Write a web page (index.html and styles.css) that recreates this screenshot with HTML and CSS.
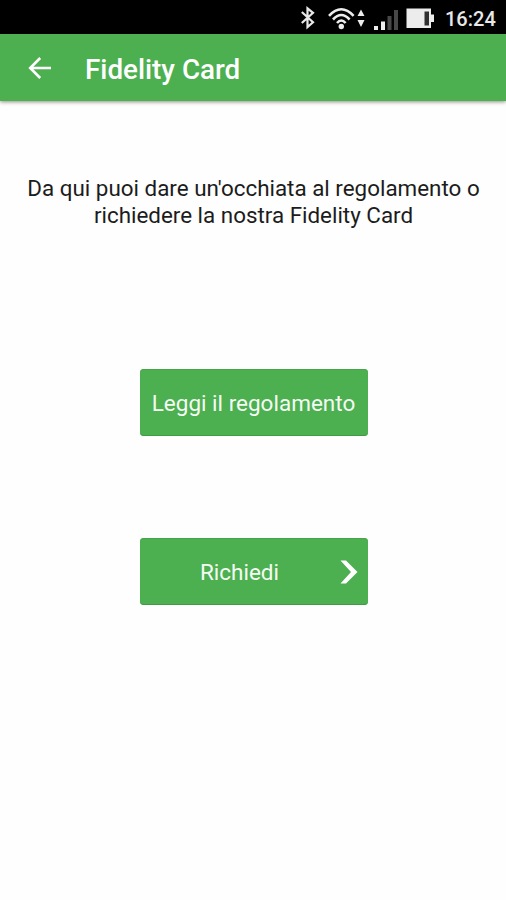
FILE: index.html
```html
<!DOCTYPE html>
<html lang="it">
<head>
<meta charset="utf-8">
<title>Fidelity Card</title>
<link rel="stylesheet" href="styles.css">
</head>
<body>
<div class="status-bar">
  <svg class="status-icons" width="138" height="34" viewBox="0 0 138 34" aria-hidden="true">
    <path class="bluetooth" d="M1.8 12 L13 22.3 L7.5 27 V8.3 L13 12.8 L1.8 23"/>
    <g class="wifi">
      <path d="M29 15.8 Q41.3 2.8 53.6 15.8"/>
      <path d="M33 19.5 Q41.3 10.5 49.6 19.5"/>
      <path d="M37 23 Q41.3 18 45.6 23"/>
    </g>
    <circle class="fill" cx="41.3" cy="26.5" r="2.7"/>
    <path class="fill" d="M57.5 16 L61 9.5 L64.5 16 Z M57.5 20 H64.5 L61 27 Z"/>
    <path class="fill" d="M74 26 H78 V30 H74 Z M81 21.5 H85 V30 H81 Z"/>
    <path class="dim" d="M87.5 16 H91.5 V30 H87.5 Z M94 10 H98 V30 H94 Z"/>
    <path class="fill" d="M106.5 8.5 H131 V14.5 H134 V22 H131 V28 H106.5 Z"/>
    <path class="empty" d="M124.5 11.5 H129 V25.5 H124.5 Z"/>
  </svg>
  <span class="clock">16:24</span>
</div>
<header class="app-bar">
  <svg class="back" width="24" height="24" viewBox="0 0 24 24" aria-label="Indietro"><path d="M23 12 H2.5 M12.2 2 L2.2 12 L12.2 22"/></svg>
  <h1 class="title">Fidelity Card</h1>
</header>
<main class="content">
  <p class="intro">Da qui puoi dare un'occhiata al regolamento o<br>richiedere la nostra Fidelity Card</p>
  <button class="button">Leggi il regolamento</button>
  <button class="button button-next">
    <span class="label">Richiedi</span>
    <svg width="18" height="24" viewBox="0 0 18 24" aria-hidden="true"><path d="M0.5 0.5 H6 L17.5 12 L6 23.5 H0.5 L11 12 Z"/></svg>
  </button>
</main>
</body>
</html>
```
FILE: styles.css
```css
* { box-sizing: border-box; }
body {
  margin: 0;
  min-height: 900px;
  background: #fefefe;
  font-family: Roboto, "Liberation Sans", sans-serif;
}
.status-bar {
  display: flex;
  justify-content: flex-end;
  height: 34px;
  padding-right: 11px;
  background: #000;
}
.status-icons { margin-right: 7px; fill: none; }
.bluetooth { stroke: #e8e8e8; stroke-width: 2.2; }
.wifi { stroke: #ececec; stroke-width: 2.6; }
.fill { fill: #ececec; }
.dim { fill: #484848; }
.empty { fill: #303030; }
.clock {
  width: 50px;
  color: #e8e8e8;
  font-size: 20px;
  font-weight: 500;
  line-height: 38px;
  text-align: right;
  white-space: nowrap;
}
.app-bar {
  display: flex;
  align-items: center;
  height: 67px;
  padding-left: 28px;
  background: #4caf50;
  box-shadow: 0 1px 4px rgba(0, 0, 0, .45);
}
.back { fill: none; stroke: #fff; stroke-width: 2.6; }
.title {
  margin: 4px 0 0 33px;
  color: #fff;
  font-size: 27.8px;
  font-weight: 500;
  line-height: 32px;
}
.content {
  display: flex;
  flex-direction: column;
  align-items: center;
  padding: 74px 0 0 1px;
}
.intro {
  margin: 0 0 140px;
  color: #1c1c1c;
  font-size: 22.4px;
  line-height: 27px;
  text-align: center;
  white-space: nowrap;
}
.button {
  width: 228px;
  height: 67px;
  margin: 0 0 102px;
  padding: 1px 0 0;
  border: 0;
  border-radius: 4px;
  background: #4caf50;
  box-shadow: inset 0 -1px #3e9d43, inset 0 1px #45a549;
  color: #f4fbf4;
  font: 22.5px/26px Roboto, "Liberation Sans", sans-serif;
  white-space: nowrap;
}
.button-next {
  display: flex;
  align-items: center;
  padding: 0 10px 0 0;
}
.label { flex: 1; }
.button-next svg { fill: #fff; }
```
